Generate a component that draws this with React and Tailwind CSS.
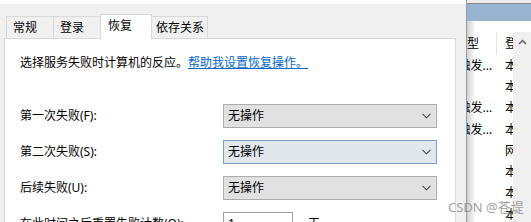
import React from "react";

const FONT = { fontFamily: "'Noto Sans', 'Noto Sans CJK SC', sans-serif" };

function Chevron() {
  return (
    <svg width="9" height="6" viewBox="0 0 9 6" className="mr-[5px] shrink-0">
      <path d="M0.5 0.8 L4.5 4.8 L8.5 0.8" fill="none" stroke="#444" strokeWidth="1.1" />
    </svg>
  );
}

function Select({ focused }) {
  return (
    <div
      className={
        "w-[214px] h-[24px] flex items-center justify-between border pl-[4px] " +
        (focused ? "bg-[#e2e7ec] border-[#7aa0c4]" : "bg-[#e1e1e1] border-[#adadad]")
      }
    >
      <span className="text-[12px] leading-[16px] text-black">无操作</span>
      <Chevron />
    </div>
  );
}

function Row({ label, children }) {
  return (
    <div className="flex items-center h-[24px] shrink-0">
      <div className="w-[203px] text-[12px] leading-[16px] text-black whitespace-nowrap">{label}</div>
      {children}
    </div>
  );
}

const listRows = [
  ["手动(触发启动)", "本地系统"],
  ["", "本地系统"],
  ["手动(触发启动)", "本地系统"],
  ["手动(触发启动)", "本地系统"],
  ["", "网络服务"],
  ["", "本地系统"],
  ["", "本地系统"],
  ["", "本地系统"],
];

export default function App() {
  return (
    <div className="w-[531px] h-[222px] overflow-hidden flex relative bg-white" style={FONT}>
      {/* Dialog */}
      <div className="w-[467px] shrink-0 flex flex-col bg-[#f0f0f0] border-r border-[#9a9a9a]">
        <div className="h-[4px] bg-white shrink-0" />
        <div className="h-[34px] shrink-0 flex items-end pl-[6px] text-[12px] leading-[16px] text-black">
          <div className="w-[47px] h-[22px] border-l border-t border-[#d9d9d9] flex items-center pl-[6px]">常规</div>
          <div className="w-[47px] h-[22px] border-l border-t border-[#d9d9d9] flex items-center pl-[6px]">登录</div>
          <div className="relative z-10 w-[52px] h-[25px] mb-[-1px] bg-white border-l border-t border-r border-[#d9d9d9] flex items-center pl-[7px] pb-[3px]">恢复</div>
          <div className="w-[56px] h-[22px] border-t border-r border-[#d9d9d9] flex items-center pl-[4px]">依存关系</div>
        </div>
        <div className="ml-[4px] w-[452px] flex-1 border border-[#d9d9d9] bg-white pl-[15px] pt-[16px] flex flex-col">
          <div className="text-[12px] leading-[16px] text-black whitespace-nowrap">
            选择服务失败时计算机的反应。<span className="text-[#0066cc] underline">帮助我设置恢复操作。</span>
          </div>
          <div className="mt-[33px] flex flex-col gap-[12px]">
            <Row label="第一次失败(F):">
              <Select />
            </Row>
            <Row label="第二次失败(S):">
              <Select focused />
            </Row>
            <Row label="后续失败(U):">
              <Select />
            </Row>
            <Row label="在此时间之后重置失败计数(O):">
              <div className="w-[70px] h-[24px] border border-[#a0a0a0] bg-white pl-[4px] flex items-center text-[12px] leading-[16px]">1</div>
              <span className="ml-[15px] text-[12px] leading-[16px]">天</span>
            </Row>
          </div>
        </div>
      </div>

      {/* Background services list */}
      <div className="flex-1 min-w-0 flex flex-col relative">
        <div className="h-[4px] shrink-0 bg-[#ececec] border-b border-[#8a8a8a]" />
        <div className="h-[17px] shrink-0 bg-[#99b4d1]" />
        <div className="flex-1 min-w-0 flex bg-white">
          <div className="flex-1 min-w-0 overflow-hidden relative">
            <div className="ml-[-43px] mt-[11px] flex flex-col text-[12px] leading-[16px] text-black whitespace-nowrap">
              <div className="h-[23px] flex items-center shrink-0">
                <div className="w-[73px] shrink-0 pl-[7px] h-full flex items-center border-r border-[#e5e5e5]">启动类型</div>
                <div className="pl-[8px]">登录为</div>
              </div>
              {listRows.map((r, i) => (
                <div key={i} className="h-[21.3px] flex items-center shrink-0">
                  <div className="w-[73px] shrink-0 pl-[7px] overflow-hidden">{r[0] ? "手动(触发..." : ""}</div>
                  <div className="pl-[8px]">{r[1]}</div>
                </div>
              ))}
            </div>
            <div className="absolute left-0 top-0 bottom-0 w-[9px] bg-gradient-to-r from-[rgba(0,0,0,0.18)] to-transparent" />
          </div>
          <div className="w-[18px] shrink-0 mt-[11px] bg-[#f0f0f0] flex justify-center pt-[7px]">
            <svg width="9" height="6" viewBox="0 0 9 6">
              <path d="M1 5 L4.5 1.5 L8 5" fill="none" stroke="#606060" strokeWidth="1.5" />
            </svg>
          </div>
        </div>
      </div>

      {/* Watermark */}
      <div className="absolute left-[448px] top-[198px] text-[13px] leading-[18px] text-[#8c8c8c] opacity-80 whitespace-nowrap">
        CSDN @苍堤
      </div>
    </div>
  );
}
